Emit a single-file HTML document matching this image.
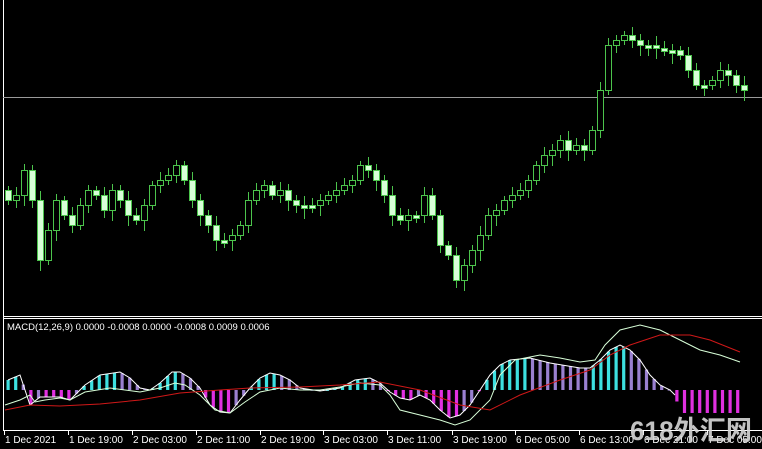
<!DOCTYPE html>
<html><head><meta charset="utf-8"><style>
html,body{margin:0;padding:0;background:#000;width:762px;height:449px;overflow:hidden}
svg{display:block}
text{font-family:"Liberation Sans","DejaVu Sans",sans-serif;fill:#fff}
</style></head><body>
<svg id="s" width="762" height="449" xmlns="http://www.w3.org/2000/svg">
<rect width="762" height="449" fill="#000"/>
<line x1="3.5" y1="0" x2="3.5" y2="431" stroke="#fff" stroke-width="1"/>
<line x1="3" y1="97.5" x2="762" y2="97.5" stroke="#9a9a9a" stroke-width="1"/>
<line x1="3" y1="316.5" x2="762" y2="316.5" stroke="#fff"/>
<line x1="3" y1="318.5" x2="762" y2="318.5" stroke="#fff"/>
<line x1="3" y1="430.5" x2="762" y2="430.5" stroke="#fff"/>
<g id="c"></g>
<g id="m"></g>
<text x="7" y="330" font-size="9.5">MACD(12,26,9) 0.0000 -0.0008 0.0000 -0.0008 0.0009 0.0006</text>
<g id="ax" font-size="10"></g>
<text x="630" y="440" font-size="27" font-weight="bold" textLength="122" lengthAdjust="spacingAndGlyphs" style="fill:#d8d8d8;font-family:'Liberation Sans','Noto Sans CJK SC',sans-serif" opacity="0.9">618外汇网</text>
</svg>
<script>
(function(){
var NS="http://www.w3.org/2000/svg";
function el(p,t,a){var e=document.createElementNS(NS,t);for(var k in a)e.setAttribute(k,a[k]);p.appendChild(e);return e;}
var ys=[200,195,170,200,260,230,200,215,225,205,190,195,210,190,200,215,220,205,185,180,175,165,180,200,215,225,240,240,235,225,200,190,185,195,190,200,205,205,205,200,195,190,185,180,165,170,180,195,215,220,215,215,195,215,245,255,280,265,250,235,215,210,200,195,190,180,165,155,150,140,150,145,150,130,90,45,40,35,40,45,45,48,50,50,55,70,85,85,80,70,75,85,90];
var c=document.getElementById('c');var prev=190;
for(var i=0;i<ys.length;i++){var x=8+i*8;var o=prev,cl=ys[i];var r=((i*37)%11);
var tp=Math.min(o,cl),bt=Math.max(o,cl);if(bt-tp<3){bt=tp+3;}
el(c,'line',{x1:x+0.5,x2:x+0.5,y1:tp-4-r%6,y2:bt+5+(r*3)%9,stroke:'#4cc44c','stroke-width':1});
var fill=(cl<o)?'#000':'#d8ffd8';
el(c,'rect',{x:x-2.5,y:tp+0.5,width:6,height:bt-tp,fill:fill,stroke:'#4cc44c','stroke-width':1});
prev=cl;}
var h=[[8,380],[20,375],[30,405],[40,397],[60,397],[70,400],[85,385],[100,375],[120,372],[130,378],[140,388],[150,390],[160,383],[172,372],[180,372],[190,378],[200,388],[210,405],[220,412],[230,413],[240,400],[250,388],[260,378],[270,373],[280,375],[290,380],[300,388],[320,391],[340,388],[355,380],[370,378],[380,383],[390,392],[400,398],[410,400],[420,395],[430,400],[440,410],[450,418],[460,415],[470,405],[480,390],[490,375],[500,365],[510,360],[530,358],[550,363],[580,368],[590,368],[600,360],[610,350],[620,345],[630,350],[640,360],[650,375],[660,385],[670,390],[675,395],[680,413],[745,413]];
function interp(a,x){for(var i=0;i<a.length-1;i++){if(x>=a[i][0]&&x<=a[i+1][0]){var t=(x-a[i][0])/(a[i+1][0]-a[i][0]);return a[i][1]+t*(a[i+1][1]-a[i][1]);}}return a[a.length-1][1];}
var m=document.getElementById('m');var pv=390;
for(var x=8;x<=745;x+=7.6){var v=interp(h,x);var col;var up=v<pv;
if(v<390)col=up?'#3de0e0':'#9a80d0';else col=up?'#9a80d0':'#e030e0';
if(((x/7.6)|0)%3==0&&v>=390)col='#e030e0';
el(m,'rect',{x:x-1.5,y:Math.min(v,390),width:3.2,height:Math.max(1,Math.abs(v-390)),fill:col});pv=v;}
var w=[[5,405],[20,400],[30,395],[35,402],[45,400],[60,398],[70,400],[85,392],[110,388],[125,390],[140,392],[160,388],[175,383],[185,385],[200,395],[215,410],[230,413],[245,402],[260,392],[280,388],[300,390],[320,390],[340,387],[360,383],[380,385],[390,395],[400,410],[420,415],[440,420],[455,425],[470,420],[490,400],[500,375],[515,360],[540,355],[560,358],[580,362],[595,360],[605,345],[620,330],[640,325],[660,330],[680,340],[700,350],[720,355],[740,362]];
var rd=[[5,410],[30,405],[60,406],[100,404],[140,400],[180,393],[220,390],[250,388],[300,387],[340,385],[380,382],[420,390],[460,405],[490,410],[520,395],[560,380],[590,370],[610,355],[630,345],[660,335],[690,335],[710,340],[740,352]];
function pl(a,c){el(m,'polyline',{points:a.map(function(p){return p.join(',')}).join(' '),fill:'none',stroke:c,'stroke-width':1});}
pl(h.filter(function(p){return p[0]<=675}),'#ffffff');
pl(w,'#d8ffd8');pl(rd,'#d01818');
var ax=document.getElementById('ax');
var labs=[[4,"1 Dec 2021"],[68,"1 Dec 19:00"],[132,"2 Dec 03:00"],[196,"2 Dec 11:00"],[260,"2 Dec 19:00"],[323,"3 Dec 03:00"],[387,"3 Dec 11:00"],[452,"3 Dec 19:00"],[515,"6 Dec 05:00"],[579,"6 Dec 13:00"],[643,"6 Dec 21:00"],[707,"7 Dec 05:00"]];
labs.forEach(function(l){el(ax,'line',{x1:l[0]+0.5,x2:l[0]+0.5,y1:431,y2:435,stroke:'#fff'});var t=el(ax,'text',{x:l[0]+1,y:443});t.textContent=l[1];});
var wm=document.querySelector('text[textLength]');ax.parentNode.appendChild(wm);
})();
</script>
</body></html>
